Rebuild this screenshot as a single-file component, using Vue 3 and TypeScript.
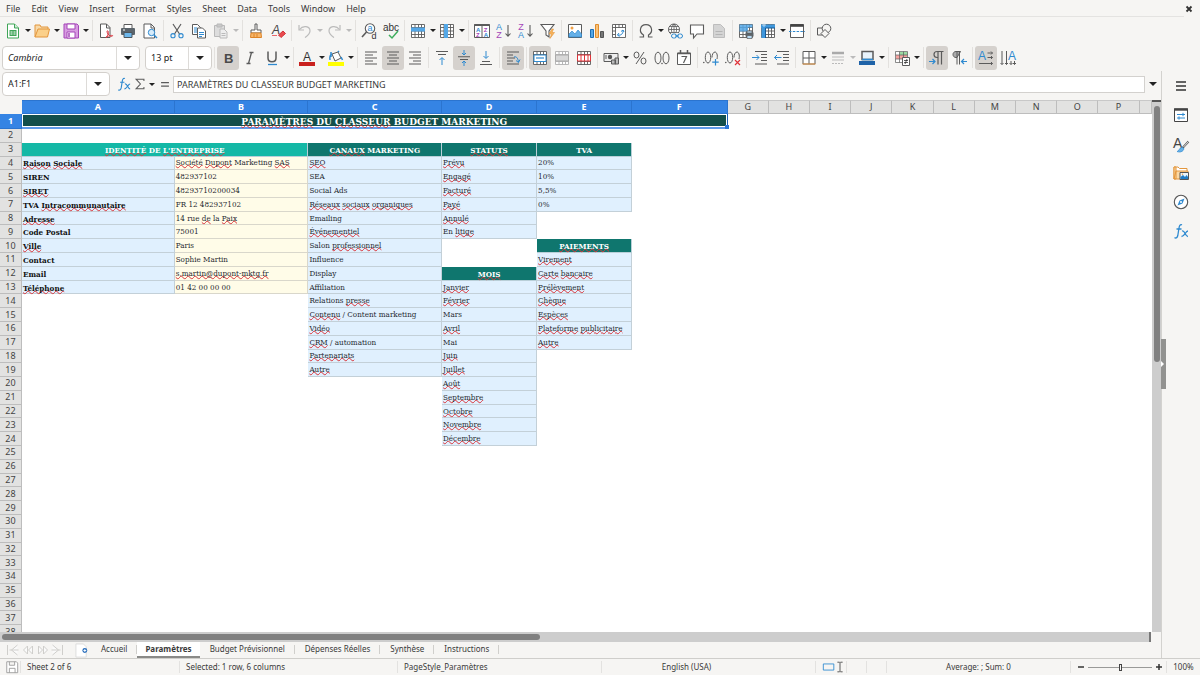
<script setup lang="ts">
import { ref } from 'vue'

type Tool = { icon: string; label: string; drop?: boolean; active?: boolean; off?: boolean }
type Cell = { text: string; kind: string; span: number }

const menus = ['File', 'Edit', 'View', 'Insert', 'Format', 'Styles', 'Sheet', 'Data', 'Tools', 'Window', 'Help']

const G = '#5b5b5b'
const B = '#2f8ad0'
const grid = (c: string) =>
  `<path d="M1.5 1.5h13v13h-13zM1.5 4.5h13M1.5 8h13M1.5 11.5h13M5 1.5v13M8.5 1.5v13M11.5 1.5v13" fill="#fff" stroke="${c}" stroke-width=".9"/>`
const lines = (rows: number[][], c = G) =>
  `<path d="${rows.map(([x, y, w]) => `M${x} ${y}h${w}`).join('')}" stroke="${c}" stroke-width="1.1" fill="none"/>`

const icons: Record<string, string> = {
  new: `<path d="M2.5 1h7l4 4v10h-11z" fill="#fff" stroke="#3fa557"/><path d="M9.500 1v4h4" fill="#cfeed6" stroke="#3fa557"/><path d="M4.500 7h7v6h-7z" fill="#3fa557"/><path d="M5.500 9h2M8.500 9h2M5.500 11h2M8.500 11h2" stroke="#fff"/>`,
  open: `<path d="M1 14V2h5l1 2h7v3" fill="#f7d9a8" stroke="#e3963c"/><path d="M1 14l3-8h11.500l-2 8z" fill="#fbd08a" stroke="#e3963c"/>`,
  save: `<path d="M1 1h13l1.500 1.500V15H1z" fill="#d79be0" stroke="#a545b8"/><path d="M4 1h8v5H4z" fill="#fff" stroke="#a545b8"/><path d="M4 9h8v6H4z" fill="#fff" stroke="#a545b8"/><path d="M6 10v4" stroke="#a545b8" stroke-width="1.500"/>`,
  pdf: `<path d="M2.500 1h6l3.500 3.500V14.500H2.500z" fill="#fff" stroke="${G}"/><path d="M8.500 1v4h3.500" fill="none" stroke="${G}"/><path d="M8 14.500c2-2 3-5 2-6.500-1-1-1.500 1 0 3s3.500 3 4.500 2-3-1-6.500 1.500z" fill="none" stroke="#dd3c46"/>`,
  print: `<path d="M4 1.500h8v4H4z" fill="#fff" stroke="${G}"/><rect x="1" y="5" width="14" height="7" rx="1" fill="#5b646b"/><path d="M4 9.500h8v5H4z" fill="#6cb6ea" stroke="#4c555c"/><path d="M3 7h2" stroke="#fff"/>`,
  preview: `<path d="M2 1h7l3.500 3.500V15H2z" fill="#fff" stroke="${G}"/><path d="M9 1v4h3.500" fill="none" stroke="${G}"/><circle cx="9.500" cy="9.500" r="3.200" fill="#d8ecfa" stroke="${B}"/><path d="M12 12l3 3" stroke="${B}" stroke-width="1.400"/>`,
  cut: `<path d="M4 1l6.500 10M12 1L5.500 11" stroke="${G}" fill="none" stroke-width="1.200"/><circle cx="4" cy="12.700" r="2.100" fill="none" stroke="${B}" stroke-width="1.100"/><circle cx="12" cy="12.700" r="2.100" fill="none" stroke="${B}" stroke-width="1.100"/>`,
  copy: `<path d="M1.500 1.500h5l3 3v7h-8z" fill="#fff" stroke="${G}"/><path d="M3 5h3M3 7h3M3 9h3" stroke="${B}"/><path d="M6.500 5h5l3 3v7h-8z" fill="#fff" stroke="${G}"/><path d="M8 9.500h5M8 11.500h5M8 13.500h3" stroke="${B}"/>`,
  paste: `<path d="M1.500 2.500h10v11h-10z" fill="#ddd" stroke="#b9b9b9"/><path d="M4 1h5v3H4z" fill="#c9c9c9" stroke="#b9b9b9"/><path d="M7 6h4l3 3v6H7z" fill="#eee" stroke="#b9b9b9"/><path d="M8.500 10.500h4M8.500 12.500h4" stroke="#bbb"/>`,
  clone: `<path d="M7 1h2v6h4v3H3V7h4z" fill="#fff" stroke="${G}"/><path d="M3 10h10l.500 4.500h-11z" fill="#f7b66b" stroke="#dd8427"/><path d="M6 11v3M9 11v3" stroke="#dd8427"/>`,
  clear: `<text x="2" y="11" font-size="12" font-style="italic" font-family="Liberation Sans, sans-serif" fill="#444">A</text><path d="M8.500 12l4.500-4 2.500 2.500-4.500 4z" fill="#ea4a4e" stroke="#d0353a"/><path d="M2 12.500h5" stroke="#e9686b"/>`,
  undo: `<path d="M2 2v5h5" fill="none" stroke="#bbb" stroke-width="1.200"/><path d="M2.500 6.500C6 2 13 3 13 8c0 3-3 5-5 6.500" fill="none" stroke="#bbb" stroke-width="1.200"/>`,
  redo: `<path d="M14 2v5H9" fill="none" stroke="#bbb" stroke-width="1.200"/><path d="M13.500 6.500C10 2 3 3 3 8c0 3 3 5 5 6.500" fill="none" stroke="#bbb" stroke-width="1.200"/>`,
  find: `<circle cx="9" cy="5.500" r="4.700" fill="#fff" stroke="${G}" stroke-width="1.100"/><path d="M5.500 9L1 14" stroke="${G}" stroke-width="1.600"/><text x="6.500" y="8" font-size="9" font-family="Liberation Sans, sans-serif" fill="${B}">a</text><text x="10.500" y="15.500" font-size="9" font-family="Liberation Sans, sans-serif" fill="#333">d</text>`,
  spell: `<text x="0" y="7.500" font-size="10" font-family="Liberation Sans, sans-serif" fill="#333">abc</text><path d="M6 12l3 3 6-7" stroke="#3fae5e" stroke-width="1.500" fill="none"/>`,
  row: grid(G) + `<path d="M1 4.500h14v4H1z" fill="#54a7e6"/>`,
  col: grid(G) + `<path d="M5 1h4v14H5z" fill="#54a7e6"/>`,
  sort: `<path d="M.500 1.500h15v13H.500zM8 1.500v13" fill="#fff" stroke="${G}"/><path d="M.500 2h15" stroke="${G}" stroke-width="2"/><g font-size="6" font-family="Liberation Sans, sans-serif" font-weight="700"><text x="2" y="8.500" fill="${B}">A</text><text x="2" y="14" fill="#a545b8">Z</text><text x="9.700" y="8.500" fill="#a545b8">Z</text><text x="9.700" y="14" fill="${B}">A</text></g>`,
  asc: `<g font-size="9" font-family="Liberation Sans, sans-serif"><text x="0" y="7" fill="${B}">A</text><text x=".300" y="15" fill="#a545b8">Z</text></g><path d="M12 2v11M9.500 10.500L12 13.200l2.500-2.700" stroke="${G}" fill="none" stroke-width="1.100"/>`,
  desc: `<g font-size="9" font-family="Liberation Sans, sans-serif"><text x=".300" y="7" fill="#a545b8">Z</text><text x="0" y="15" fill="${B}">A</text></g><path d="M12 2v11M9.500 10.500L12 13.200l2.500-2.700" stroke="${G}" fill="none" stroke-width="1.100"/>`,
  filter: `<path d="M1 1.500h13L9 8v6l-3-2V8z" fill="#fff" stroke="${G}" stroke-width="1.100"/><path d="M12 6L9 11h2.500L10 15.500l4.500-6H12L13.500 6z" fill="#f9b45a" stroke="#e3963c" stroke-width=".6"/>`,
  image: `<path d="M1.500 1.500h13v13h-13z" fill="#fff" stroke="${G}"/><circle cx="5" cy="5" r="1.500" fill="#f0a046"/><path d="M2 14v-3l3-3 3 3 3-4 3.500 4v3z" fill="#64b0e8" stroke="${B}" stroke-width=".7"/>`,
  chart: `<path d="M1.500 6.500h3v8h-3z" fill="#54a7e6" stroke="#1d6fb4"/><path d="M6.500 1.500h3v13h-3z" fill="#f9c27a" stroke="#e08d2c"/><path d="M11.500 8.500h3v6h-3z" fill="#777" stroke="#555"/>`,
  pivot: `<path d="M1.500 1.500h13v13h-13zM1.500 4.500h13M4.500 1.500v13M8 1.500v3M11.500 1.500v3M1.500 8h3M1.500 11.500h3" fill="#fff" stroke="${G}" stroke-width=".9"/><path d="M6.500 12c4 1 6-2 5.500-5M12 7l-2 1.500M12 7l1 2M6.500 12l1.500-2M6.500 12l2 1.500" fill="none" stroke="${B}"/>`,
  omega: `<path d="M1.500 14h4v-2C3 10.500 2 8.500 2.500 6 3 3 5 1.700 8 1.700S13 3 13.500 6c.500 2.500-.500 4.500-3 6v2h4" fill="none" stroke="${G}" stroke-width="1.200"/>`,
  link: `<circle cx="7" cy="6.500" r="5.500" fill="#fff" stroke="${G}"/><path d="M1.500 6.500h11M7 1v11M2.500 3.500h9M3 9.500h8M7 1C3.500 4 3.500 9 7 12M7 1c3.500 3 3.500 8 0 11" fill="none" stroke="${G}" stroke-width=".8"/><path d="M4 10h12v6H4z" fill="#f6f5f3"/><rect x="4.500" y="11" width="5" height="4" rx="2" fill="none" stroke="${B}"/><rect x="10.500" y="11" width="5" height="4" rx="2" fill="none" stroke="${B}"/><path d="M8 13h4" stroke="${B}"/>`,
  comment: `<path d="M1.500 2h13v9H8l-3.500 4V11h-3z" fill="#fff" stroke="${G}" stroke-width="1.100"/>`,
  headfoot: `<path d="M2.500 1.500h7l4 4v9h-11z" fill="#d4d4d4" stroke="#bdbdbd"/><path d="M4.500 11.500h7M4.500 8.500h7" stroke="#b5b5b5"/>`,
  printarea: grid(G) + `<path d="M1.500 1.500h13v3h-13zM1.500 4.500h8.500v4h-8.500z" fill="#54a7e6" opacity=".85"/><rect x="7.500" y="9.500" width="8" height="4" fill="#5b646b"/><path d="M9 8h5v2H9zM9 12.500h5v3H9z" fill="#b9dcf5" stroke="${G}" stroke-width=".7"/>`,
  freeze: grid(G) + `<path d="M1 1.500h14v3.500H1zM1.500 1.500h4v13.500h-4z" fill="#3f97dc"/><path d="M5.500 5v10M5.500 5H15" stroke="#155a98"/><path d="M4 0v4M2 2h4" stroke="#cfe7f9" stroke-width=".8"/>`,
  split: `<path d="M1.500 1.500h13v13h-13z" fill="#fff" stroke="${G}"/><path d="M1.500 2.500h13" stroke="#444" stroke-width="2.600"/><path d="M0 8.500h16" stroke="${B}" stroke-dasharray="2.500 1.300"/>`,
  shapes: `<path d="M1.500 5h7v7h-7z" fill="#f6f5f3" stroke="${G}"/><circle cx="10.500" cy="5.500" r="4.300" fill="#f6f5f3" stroke="${G}"/><path d="M9 6.500l4 4-4 4-4-4z" fill="#f6f5f3" stroke="${G}"/>`,
  bold: `<text x="4" y="12.500" font-size="13" font-weight="700" font-family="Liberation Sans, sans-serif" fill="#4a4a4a">B</text>`,
  italic: `<path d="M7.500 2.500h4M4.500 13.500h4M9.500 2.500L6.500 13.500" stroke="${G}" stroke-width="1.300"/>`,
  underline: `<path d="M4 1.500v6.500c0 5 8 5 8 0V1.500" fill="none" stroke="${G}" stroke-width="1.500"/><path d="M4 14.500h9" stroke="${B}" stroke-width="1.300"/>`,
  fontcolor: `<text x="4" y="10.500" font-size="12" font-family="Liberation Sans, sans-serif" fill="#333">A</text><path d="M0 12h16v4H0z" fill="#c9211e"/>`,
  highlight: `<path d="M4 4l6-2 3 6-6 3z" fill="#fff" stroke="${G}"/><path d="M4 4c-2 1-2.500 3-2 6M3 2v5M10 2l1-1" stroke="${B}" fill="none" stroke-width="1.500"/><path d="M13 7l1.500 3" stroke="${B}" stroke-width="1.500"/><path d="M0 12h16v4H0z" fill="#ffff00"/>`,
  left: lines([[2, 2, 12], [2, 5, 8], [2, 8, 12], [2, 11, 8], [2, 14, 12]]),
  center: lines([[2, 2, 12], [4, 5, 8], [2, 8, 12], [4, 11, 8], [2, 14, 12]]),
  right: lines([[2, 2, 12], [6, 5, 8], [2, 8, 12], [6, 11, 8], [2, 14, 12]]),
  top: lines([[2, 1.5, 12], [4, 4.5, 8]]) + `<path d="M8 15V8M5.500 10L8 7.500l2.500 2.500" stroke="${B}" fill="none"/>`,
  middle: lines([[2, 6.8, 12], [4, 9.5, 8]]) + `<path d="M8 0v5M6 3l2 2 2-2M8 16v-5M6 13l2-2 2 2" stroke="${B}" fill="none"/>`,
  bottom: lines([[4, 11.5, 8], [2, 14.5, 12]]) + `<path d="M8 1v7M5.500 6L8 8.500 10.500 6" stroke="${B}" fill="none"/>`,
  wrap: lines([[2, 2, 12], [2, 5, 6], [2, 8, 8], [2, 11, 6], [2, 14, 12]]) + `<path d="M9 7c3-1 4 2 4.500 5M11 10.500l2.500 2 1.500-3" stroke="${B}" fill="none"/>`,
  merge: grid(G) + `<path d="M2 5h12v6.500H2z" fill="#fff" stroke="${B}"/><path d="M4 8h8" stroke="${B}" stroke-width="1.200"/>`,
  mergecell: grid('#b0b0b0') + `<path d="M1.500 5h13v6h-13z" fill="#d8d8d8" stroke="#aaa"/>`,
  unmerge: grid(G) + `<path d="M1.500 5h13v6h-13zM5 5v6M8.500 5v6M12 5v6" fill="#fff" stroke="#e0343a"/>`,
  currency: `<path d="M1 3.500h14v8H1z" fill="#eee" stroke="${G}"/><circle cx="7" cy="7" r="2.200" fill="#555"/><path d="M3 5v4" stroke="${G}"/><path d="M8.500 10h4v4h-4zM12 8h3.500v6H12z" fill="#bbb" stroke="${G}"/>`,
  percent: `<ellipse cx="4.500" cy="5" rx="2.500" ry="3" fill="none" stroke="${G}"/><ellipse cx="11.500" cy="11" rx="2.500" ry="3" fill="none" stroke="${G}"/><path d="M12 2L4 14" stroke="${G}"/>`,
  number: `<ellipse cx="4" cy="8" rx="3" ry="5.800" fill="none" stroke="${G}"/><ellipse cx="12" cy="8" rx="3" ry="5.800" fill="none" stroke="${G}"/><circle cx="8" cy="13.500" r=".8" fill="${G}"/>`,
  date: `<path d="M1.500 3h13v11.500h-13z" fill="#fff" stroke="${G}"/><path d="M1.500 3.500h13M4.500 0v4M11.500 0v4" stroke="${G}" stroke-width="1.500"/><path d="M5.500 6.500h5L7.500 13" stroke="${G}" stroke-width="1.200" fill="none"/>`,
  adddec: `<circle cx=".800" cy="12.500" r=".8" fill="${G}"/><ellipse cx="5" cy="7.500" rx="2.700" ry="5.500" fill="none" stroke="${G}"/><path d="M14 9c1-4-.500-7-2-7-2 0-3 3-3 5.500" fill="none" stroke="${G}"/><path d="M12.500 9v6.500M9.200 12.200h6.500" stroke="${B}" stroke-width="1.200"/>`,
  deldec: `<circle cx=".800" cy="12.500" r=".8" fill="${G}"/><ellipse cx="5" cy="7.500" rx="2.700" ry="5.500" fill="none" stroke="${G}"/><path d="M14 9c1-4-.500-7-2-7-2 0-3 3-3 5.500" fill="none" stroke="${G}"/><path d="M10 10l5 5M15 10l-5 5" stroke="#e0343a" stroke-width="1.200"/>`,
  indent: lines([[3, 1.5, 12], [9, 4.5, 6], [9, 7.5, 6], [9, 10.5, 6], [3, 14, 12]]) + `<path d="M0 7.500h7M4.500 5L7 7.500 4.500 10" stroke="${B}" fill="none"/>`,
  outdent: lines([[3, 1.5, 12], [9, 4.5, 6], [9, 7.5, 6], [9, 10.5, 6], [3, 14, 12]]) + `<path d="M7.500 7.500H.500M3 5L.500 7.500 3 10" stroke="${B}" fill="none"/>`,
  borders: `<path d="M2 1.500h12v12.500H2zM8 1.500V14M2 8h12" fill="#fff" stroke="${G}"/><path d="M1.500 14h13" stroke="#e89a45"/>`,
  bstyle: `<path d="M2 3h12" stroke="#aaa" stroke-width="2.500"/><path d="M2 7h12M2 10h12" stroke="#bbb"/><path d="M2 13.500h12" stroke="#bbb" stroke-dasharray="2 1"/>`,
  bcolor: `<path d="M3 1.500h11v8H3z" fill="#e8f3fb" stroke="${G}" stroke-width="1.500"/><path d="M3 9.500h11" stroke="${B}" stroke-width="1.600"/><path d="M0 11h16v4H0z" fill="#1f63a8"/>`,
  cond: `<path d="M1.500 1.500h12v11h-12z" fill="#fff"/><path d="M5.500 2h8v3h-8z" fill="#9bd9a2"/><path d="M2 5h11v4H2z" fill="#f5a3a0"/><path d="M1.500 1.500h12v11h-12zM1.500 5h12M1.500 9h12M5.500 1.500v11M9.500 1.500v11" stroke="${G}" stroke-width=".7"/><path d="M8.500 7.500h7v8h-7z" fill="#fff" stroke="${G}"/><path d="M10 10.500h4M10 12.500h4M13 9l-2 5" stroke="#333" stroke-width=".8"/>`,
  ltr: `<path d="M14.500 1.500H8c-4 0-4 6 0 6h1M9 1.500v13M12.500 1.500v13" fill="none" stroke="${G}" stroke-width="1.200"/><path d="M0 11.500h6M3.500 9L6 11.500 3.500 14" fill="none" stroke="${B}" stroke-width="1.200"/>`,
  rtl: `<path d="M9.500 1.500H5c-4 0-4 6 0 6h1z" fill="#aaa" stroke="${G}"/><path d="M6 1.500v13M8.500 1.500v13" stroke="${G}"/><path d="M16 11.500h-5.500M13 9l-2.500 2.500L13 14" fill="none" stroke="${B}" stroke-width="1.200"/>`,
  texth: `<text x="0" y="10" font-size="12" font-family="Liberation Sans, sans-serif" fill="${B}">A</text><path d="M9.500 3h5M13 1.500L14.500 3 13 4.500M9.500 7.500h5M13 6l1.500 1.500L13 9M1 13.500h13.500M13 12l1.500 1.500L13 15" stroke="${G}" fill="none"/>`,
  textv: `<text x="8" y="10" font-size="12" font-family="Liberation Sans, sans-serif" fill="${B}">A</text><path d="M2 1v13.500M.500 13L2 14.500 3.500 13M6.500 1v13.500M5 13l1.500 1.500L8 13M11 11v3.500M9.500 13l1.500 1.500 1.500-1.500M14.500 11v3.500M13 13l1.500 1.500L16 13" stroke="${G}" fill="none"/>`,
  fx: `<path d="M9 1.800C7 .800 6.300 3 6 5L4.800 12.500c-.400 2-1.500 3-3.300 2.200M3.500 6h5" fill="none" stroke="${B}" stroke-width="1.300"/><path d="M9 8c3-1 3 5.500 6 5.500M15 8c-2.500 0-3.500 5.500-6.500 5.500" fill="none" stroke="${B}" stroke-width="1.300"/>`,
  sigma: `<path d="M12.500 4.500V2.500H3.500L8.500 8l-5 5.500h9v-2" fill="none" stroke="${G}" stroke-width="1.200"/>`,
  equal: `<path d="M3.500 6.500h9M3.500 10.500h9" stroke="${G}" stroke-width="1.500"/>`,
  burger: `<path d="M3 4h10M3 8h10M3 12h10" stroke="#333" stroke-width="1.400"/>`,
  props: `<path d="M1.500 2h13v12.500h-13z" fill="#fff" stroke="#444"/><path d="M1 2.500h14" stroke="#444" stroke-width="2.400"/><path d="M4 7.500h8M4 11h8M10 5.800v3.400M6 9.400v3.200" stroke="${B}"/>`,
  styles: `<text x="0" y="12" font-size="14" font-family="Liberation Sans, sans-serif" fill="#444">A</text><path d="M15.500 5.500L9.500 12" stroke="${G}" stroke-width="2"/><path d="M15.500 5.500L10.500 11" stroke="#fff" stroke-width=".8"/><path d="M4 15.500c2 0 2-3.500 4.500-4s3 2 1 3.500-4 1-5.500.5z" fill="#66b1e8" stroke="${B}" stroke-width=".7"/>`,
  gallery: `<path d="M1 14V2h4l1.500 1.500H14V7" fill="#fff" stroke="#e3963c"/><path d="M1 14V2h2v12zM3 6h12v8H1z" fill="#fbd9a5" stroke="#e3963c"/><path d="M7 7.500h8.500v7H7z" fill="#eaf5fd" stroke="#555"/><path d="M7.500 14v-2l2.500-2 2 2 1.500-2 1.500 2v2z" fill="#1f7cc6"/><circle cx="9.500" cy="9.300" r=".7" fill="#f0a046"/>`,
  navigator: `<circle cx="8" cy="8" r="6.700" fill="#fff" stroke="#555" stroke-width="1.100"/><path d="M11.500 4.500L9.500 9.500 4.500 11.500 6.500 6.500z" fill="${B}"/><circle cx="8" cy="8" r="1" fill="#fff"/>`,
  floppy: `<path d="M2 2h11l1.500 1.500V14.500H2zM5 2v4h6V2M5 14.500V9.500h6.500v5" fill="#fff" stroke="#999"/>`,
  addsheet: `<path d="M1.500 1h8l3 3v11h-11z" fill="#fff" stroke="#dcdcdc"/><circle cx="11" cy="8" r="2.600" fill="#2a6fbd"/><path d="M11 6.500v3M9.500 8h3" stroke="#fff"/>`,
  selmode: `<path d="M1.500 4.500h12v7h-12z" fill="none" stroke="${B}"/>`,
  ibeam: `<path d="M5 2.500h2.500l.500.500.500-.500H11M5 13.500h2.500l.500-.500.500.500H11M8 3v10" fill="none" stroke="#555" stroke-width="1.100"/>`
}

const t = (icon: string, label: string, o: Partial<Tool> = {}): Tool => ({ icon, label, ...o })
const d = { drop: true }

const standard: Tool[][] = [
  [t('new', 'New', d), t('open', 'Open', d), t('save', 'Save', d)],
  [t('pdf', 'Export as PDF'), t('print', 'Print'), t('preview', 'Print Preview')],
  [t('cut', 'Cut'), t('copy', 'Copy'), t('paste', 'Paste', { drop: true, off: true })],
  [t('clone', 'Clone Formatting'), t('clear', 'Clear Direct Formatting')],
  [t('undo', 'Undo', { drop: true, off: true }), t('redo', 'Redo', { drop: true, off: true })],
  [t('find', 'Find and Replace'), t('spell', 'Spelling')],
  [t('row', 'Row', d), t('col', 'Column', d)],
  [t('sort', 'Sort'), t('asc', 'Sort Ascending'), t('desc', 'Sort Descending'), t('filter', 'AutoFilter')],
  [t('image', 'Insert Image'), t('chart', 'Insert Chart'), t('pivot', 'Pivot Table')],
  [t('omega', 'Special Character', d), t('link', 'Hyperlink'), t('comment', 'Comment'), t('headfoot', 'Headers and Footers', { off: true })],
  [t('printarea', 'Define Print Area'), t('freeze', 'Freeze Rows and Columns', d), t('split', 'Split Window')],
  [t('shapes', 'Show Draw Functions')]
]
const on = { active: true }
const formatting: Tool[][] = [
  [t('bold', 'Bold', on), t('italic', 'Italic'), t('underline', 'Underline', d)],
  [t('fontcolor', 'Font Color', d), t('highlight', 'Background Color', d)],
  [t('left', 'Align Left'), t('center', 'Center Horizontally', on), t('right', 'Align Right')],
  [t('top', 'Align Top'), t('middle', 'Center Vertically', on), t('bottom', 'Align Bottom')],
  [t('wrap', 'Wrap Text', on)],
  [t('merge', 'Merge and Center', on), t('mergecell', 'Merge Cells', { off: true }), t('unmerge', 'Unmerge Cells')],
  [t('currency', 'Currency', d), t('percent', 'Percent'), t('number', 'Number'), t('date', 'Date')],
  [t('adddec', 'Add Decimal Place'), t('deldec', 'Delete Decimal Place')],
  [t('indent', 'Increase Indent'), t('outdent', 'Decrease Indent')],
  [t('borders', 'Borders', d), t('bstyle', 'Border Style', { drop: true, off: true }), t('bcolor', 'Border Color', d)],
  [t('cond', 'Conditional Formatting', d)],
  [t('ltr', 'Left-To-Right', on), t('rtl', 'Right-To-Left')],
  [t('texth', 'Text direction from left to right', on), t('textv', 'Text direction from top to bottom')]
]
const deck = [t('burger', 'Sidebar Settings'), t('props', 'Properties'), t('styles', 'Styles'), t('gallery', 'Gallery'), t('navigator', 'Navigator'), t('fx', 'Functions')]

const fontName = ref('Cambria')
const fontSize = ref('13 pt')
const cellRef = ref('A1:F1')
const formula = ref('PARAMÈTRES DU CLASSEUR BUDGET MARKETING')
const zoom = ref(50)

const columns = 'ABCDEFGHIJKLMNOPQ'.split('')

// A leading underscore marks a word that the spell checker flags.
const blocks: { col: number; row: number; kind: string; items: string[] }[] = [
  { col: 0, row: 4, kind: 'label', items: ['_Raison _Sociale', 'SIREN', '_SIRET', 'TVA _Intracommunautaire', '_Adresse', 'Code Postal', '_Ville', 'Contact', 'Email', '_Téléphone'] },
  { col: 1, row: 4, kind: 'entry', items: ['_Société _Dupont Marketing _SAS', '482937102', '48293710200034', 'FR 12 482937102', '14 rue _de la _Paix', '75001', 'Paris', 'Sophie Martin', '_s.martin@dupont-mktg.fr', '01 42 00 00 00'] },
  { col: 2, row: 3, kind: 'head', items: ['_CANAUX MARKETING'] },
  { col: 2, row: 4, kind: 'list', items: ['_SEO', 'SEA', 'Social Ads', '_Réseaux _sociaux _organiques', 'Emailing', '_Événementiel', 'Salon _professionnel', 'Influence', 'Display', 'Affiliation', 'Relations _presse', '_Contenu / Content marketing', '_Vidéo', '_CRM / automation', '_Partenariats', '_Autre'] },
  { col: 3, row: 3, kind: 'head', items: ['_STATUTS'] },
  { col: 3, row: 4, kind: 'list', items: ['_Prévu', '_Engagé', '_Facturé', '_Payé', '_Annulé', 'En _litige'] },
  { col: 3, row: 12, kind: 'head', items: ['_MOIS'] },
  { col: 3, row: 13, kind: 'list', items: ['_Janvier', '_Février', 'Mars', '_Avril', 'Mai', '_Juin', '_Juillet', '_Août', '_Septembre', '_Octobre', '_Novembre', '_Décembre'] },
  { col: 4, row: 3, kind: 'head', items: ['TVA'] },
  { col: 4, row: 4, kind: 'list', items: ['20%', '10%', '5,5%', '0%'] },
  { col: 4, row: 10, kind: 'head', items: ['_PAIEMENTS'] },
  { col: 4, row: 11, kind: 'list', items: ['_Virement', '_Carte _bancaire', '_Prélèvement', '_Chèque', '_Espèces', '_Plateforme _publicitaire', '_Autre'] }
]

function cellAt(row: number, col: number): Cell {
  for (const b of blocks) {
    const item = b.items[row - b.row]
    if (b.col === col && item !== undefined) return { text: item, kind: b.kind, span: 1 }
  }
  return { text: '', kind: 'blank', span: 1 }
}

const rows = Array.from({ length: 38 }, (_, i) => {
  const n = i + 1
  const cells: Cell[] = []
  if (n === 1) cells.push({ text: '_PARAMÈTRES DU _CLASSEUR BUDGET MARKETING', kind: 'title', span: 6 })
  if (n === 3) cells.push({ text: "_IDENTITÉ DE _L'ENTREPRISE", kind: 'band', span: 2 })
  const start = n === 1 ? 6 : n === 3 ? 2 : 0
  for (let c = start; c < columns.length; c++) cells.push(cellAt(n, c))
  return { n, cells }
})

const words = (s: string) => s.split(' ').map((w, i) => ({ lead: i ? ' ' : '', bad: w.startsWith('_'), w: w.replace('_', '') }))

const tabs = ['Accueil', 'Paramètres', 'Budget Prévisionnel', 'Dépenses Réelles', 'Synthèse', 'Instructions']
const current = ref('Paramètres')
</script>

<template>
  <div class="app">
    <nav class="menubar" aria-label="Menu">
      <button v-for="m in menus" :key="m" type="button">{{ m }}</button>
      <button class="close" type="button" aria-label="Close document">
        <svg viewBox="0 0 8 8"><path d="M1.500 1.500l5 5M6.500 1.500l-5 5" stroke="#333" stroke-width="1.800" /></svg>
      </button>
    </nav>

    <div class="toolbar" role="toolbar" aria-label="Standard">
      <template v-for="(g, gi) in standard" :key="gi">
        <span v-if="gi" class="sep"></span>
        <template v-for="b in g" :key="b.icon">
          <button class="tool" :class="{ active: b.active }" type="button" :aria-label="b.label" :disabled="b.off">
            <svg viewBox="0 0 16 16" fill="none" v-html="icons[b.icon]"></svg>
          </button>
          <button v-if="b.drop" class="arrow" type="button" :aria-label="b.label + ' options'" :disabled="b.off"></button>
        </template>
      </template>
    </div>

    <div class="toolbar" role="toolbar" aria-label="Formatting">
      <div class="combo font">
        <input v-model="fontName" aria-label="Font Name" />
        <button type="button" aria-label="Font list"></button>
      </div>
      <div class="combo size">
        <input v-model="fontSize" aria-label="Font Size" />
        <button type="button" aria-label="Size list"></button>
      </div>
      <template v-for="(g, gi) in formatting" :key="gi">
        <span class="sep"></span>
        <template v-for="b in g" :key="b.icon">
          <button class="tool" :class="{ active: b.active }" type="button" :aria-label="b.label" :disabled="b.off">
            <svg viewBox="0 0 16 16" fill="none" v-html="icons[b.icon]"></svg>
          </button>
          <button v-if="b.drop" class="arrow" type="button" :aria-label="b.label + ' options'" :disabled="b.off"></button>
        </template>
      </template>
    </div>

    <div class="main">
      <div class="work">
        <div class="formula">
          <div class="combo name">
            <input v-model="cellRef" aria-label="Name Box" />
            <button type="button" aria-label="Name list"></button>
          </div>
          <button class="fbtn" type="button" aria-label="Function Wizard"><svg viewBox="0 0 16 16" fill="none" v-html="icons.fx"></svg></button>
          <button class="fbtn" type="button" aria-label="Select Function"><svg viewBox="0 0 16 16" fill="none" v-html="icons.sigma"></svg></button>
          <button class="arrow" type="button" aria-label="Function options"></button>
          <button class="fbtn eq" type="button" aria-label="Formula"><svg viewBox="0 0 16 16" fill="none" v-html="icons.equal"></svg></button>
          <input v-model="formula" class="line" aria-label="Input line" />
          <button class="expand" type="button" aria-label="Expand Formula Bar"></button>
        </div>

        <div class="sheetrow">
          <div class="sheet">
            <table>
              <thead>
                <tr>
                  <th class="corner"></th>
                  <th v-for="(c, ci) in columns" :key="c" class="colhead" :class="{ sel: ci < 6 }" scope="col">{{ c === 'Q' ? '' : c }}</th>
                </tr>
              </thead>
              <tbody>
                <tr v-for="r in rows" :key="r.n">
                  <th class="rowhead" :class="{ sel: r.n === 1 }" scope="row">{{ r.n }}</th>
                  <td v-for="(c, ci) in r.cells" :key="ci" :class="[c.kind, 'span' + c.span]" :colspan="c.span">
                    <span v-if="c.text"><template v-for="(w, wi) in words(c.text)" :key="wi">{{ w.lead }}<span :class="{ bad: w.bad }">{{ w.w }}</span></template></span>
                  </td>
                </tr>
              </tbody>
            </table>
          </div>
          <div class="vscroll"><div class="thumb"></div></div>
        </div>
        <div class="hrow">
          <div class="hscroll"><div class="thumb"></div></div>
        </div>

        <div class="tabs">
          <div class="tabnav">
            <button v-for="(p, i) in ['M2 1v10M12 1L6 6l6 5M4 6h9', 'M7 2L3 6l4 4zM12 2L8 6l4 4z', 'M3 2l4 4-4 4zM8 2l4 4-4 4z', 'M12 1v10M2 1l6 5-6 5M1 6h9']" :key="i" type="button" :aria-label="['First sheet', 'Previous sheet', 'Next sheet', 'Last sheet'][i]">
              <svg viewBox="0 0 14 12"><path :d="p" fill="#fafafa" stroke="#cfcecb" /></svg>
            </button>
          </div>
          <button class="add" type="button" aria-label="Add sheet"><svg viewBox="0 0 16 16" fill="none" v-html="icons.addsheet"></svg></button>
          <button v-for="s in tabs" :key="s" class="tab" :class="{ current: s === current }" type="button" @click="current = s">{{ s }}</button>
        </div>
      </div>

      <aside class="deck" aria-label="Sidebar">
        <button v-for="b in deck" :key="b.icon" type="button" :aria-label="b.label">
          <svg viewBox="0 0 16 16" fill="none" v-html="icons[b.icon]"></svg>
        </button>
        <button class="handle" type="button" aria-label="Hide sidebar"></button>
      </aside>
    </div>

    <footer class="status">
      <span class="s-save"><svg viewBox="0 0 16 16" fill="none" v-html="icons.floppy"></svg></span>
      <span class="s-sheet">Sheet 2 of 6</span>
      <span class="s-sel">Selected: 1 row, 6 columns</span>
      <span class="s-style">PageStyle_Paramètres</span>
      <span class="s-lang">English (USA)</span>
      <span class="s-mode"><svg viewBox="0 0 16 16" fill="none" v-html="icons.selmode"></svg><svg class="beam" viewBox="0 0 16 16" fill="none" v-html="icons.ibeam"></svg></span>
      <span class="s-gap"></span>
      <span class="s-gap"></span>
      <span class="s-sum">Average: ; Sum: 0</span>
      <span class="s-zoom">
        <button type="button" aria-label="Zoom out"><svg viewBox="0 0 8 8"><path d="M1 4h6" stroke="#333" stroke-width="1.500" /></svg></button>
        <input v-model="zoom" type="range" aria-label="Zoom" />
        <button type="button" aria-label="Zoom in"><svg viewBox="0 0 8 8"><path d="M1 4h6M4 1v6" stroke="#333" stroke-width="1.500" /></svg></button>
      </span>
      <span class="s-pct">100%</span>
    </footer>
  </div>
</template>

<style>
body {
  margin: 0;
  background: #f6f5f3;
}
</style>

<style scoped>
.app {
  display: flex;
  flex-direction: column;
  height: 100vh;
  overflow: hidden;
  background: #f6f5f3;
  color: #3a3a3a;
  font: 9px/12px "Noto Sans", "Open Sans", sans-serif;
}
.app * {
  box-sizing: border-box;
}
button,
input {
  margin: 0;
  padding: 0;
  border: 0;
  background: none;
  color: inherit;
  font: inherit;
}
svg {
  display: block;
  width: 16px;
  height: 16px;
  overflow: visible;
}
.menubar {
  display: flex;
  flex: none;
  align-items: center;
  gap: 11px;
  height: 17px;
  margin-right: 16px;
  padding-top: 1px;
  padding-left: 6px;
  border-bottom: 1px solid #e4e3e1;
}
.close {
  margin-left: auto;
  margin-right: -9px;
}
.close svg {
  width: 8px;
  height: 8px;
}
.toolbar {
  display: flex;
  flex: none;
  align-items: center;
  height: 27px;
  padding-left: 2px;
}
.tool {
  display: flex;
  flex: none;
  align-items: center;
  justify-content: center;
  width: 22px;
  height: 24px;
  border-radius: 3px;
}
.tool.active {
  background: #d5d1cd;
}
.arrow {
  display: flex;
  flex: none;
  align-items: center;
  justify-content: center;
  width: 7px;
  height: 24px;
}
.arrow::before,
.combo button::before,
.expand::before {
  content: "";
  border: 3px solid transparent;
  border-top: 3px solid #222;
  border-bottom: 0;
}
.arrow:disabled::before {
  border-top-color: #bbb;
}
.sep {
  flex: none;
  width: 1px;
  height: 21px;
  margin: 0 2px;
  background: #e3e1de;
}
.arrow + .sep {
  margin-left: 3px;
}
.combo {
  display: flex;
  flex: none;
  height: 24px;
  border: 1px solid #d3d0cc;
  border-radius: 4px;
  background: #fff;
}
.combo input {
  flex: 1;
  min-width: 0;
  padding-left: 5px;
  color: #222;
}
.combo button {
  display: flex;
  align-items: center;
  justify-content: center;
  width: 23px;
  border-left: 1px solid #dddbd8;
}
.combo button::before {
  border-width: 4px 4px 0;
}
.font {
  width: 138px;
  margin-right: 5px;
}
.font input {
  font-style: italic;
}
.size {
  width: 67px;
}
.main {
  display: flex;
  flex: 1;
  min-height: 0;
}
.work {
  display: flex;
  flex: 1;
  flex-direction: column;
  min-width: 0;
}
.formula {
  display: flex;
  flex: none;
  align-items: center;
  height: 29px;
  padding: 0 0 3px 2px;
}
.name {
  width: 108px;
  margin-right: 6px;
}
.fbtn {
  flex: none;
  width: 16px;
}
.fbtn svg {
  height: 14px;
}
.eq {
  margin-left: 2px;
}
.line {
  flex: 1;
  min-width: 0;
  height: 17px;
  padding-left: 3px;
  border: 1px solid #d3d1ce;
  background: #fff;
}
.expand {
  display: flex;
  align-items: center;
  justify-content: center;
  width: 16px;
  height: 20px;
}
.expand::before {
  border-width: 4px 4px 0;
}
.sheetrow {
  display: flex;
  flex: 1;
  min-height: 0;
}
.sheet {
  flex: 1;
  min-width: 0;
  overflow: hidden;
  background: #fff;
}
table {
  display: grid;
  grid-template-columns: 22px 1527fr 1337fr 1337fr 950fr 950fr 955fr repeat(10, 412fr) 124fr;
  grid-template-rows: 14px 15px repeat(37, minmax(0, 1fr));
  height: calc(100% + 7px);
}
thead,
tbody,
tr {
  display: contents;
}
th,
td {
  display: flex;
  align-items: center;
  min-width: 0;
  min-height: 0;
  padding: 0;
  white-space: pre;
}
.span2 {
  grid-column: span 2;
}
.span6 {
  grid-column: span 6;
}
.corner {
  background: #f6f5f3;
}
.colhead,
.rowhead {
  justify-content: center;
  border-right: 1px solid #bdbdbd;
  border-bottom: 1px solid #bdbdbd;
  background: #e2e2e1;
  color: #444;
  font-weight: 400;
}
.colhead {
  border-top: 1px solid #c8c8c8;
}
.colhead.sel,
.rowhead.sel {
  border-color: #2b74cf;
  background: #3584e4;
  color: #fff;
  font-weight: 700;
}
td {
  padding-top: 1px;
  color: #1f2a30;
  font: 8px/12px "DejaVu Serif Condensed", "DejaVu Serif", serif;
}
.title,
.band,
.head {
  justify-content: center;
  color: #fff;
  font-weight: 700;
}
.title {
  position: relative;
  padding-top: 2px;
  border-right: 1px solid #1a5fb4;
  border-bottom: 2px solid #5f9bea;
  background: #134f4b;
  box-shadow: inset 0 0 0 1px #fff;
  font-size: 10px;
}
.title::after {
  content: "";
  position: absolute;
  right: -2px;
  bottom: -2px;
  width: 4px;
  height: 4px;
  background: #2a76d8;
}
.band,
.head {
  border-right: 1px solid #b9cfd8;
  border-bottom: 1px solid #b9cfd8;
}
.band {
  background: #14b8a6;
}
.head {
  background: #0f766e;
}
.label,
.entry,
.list {
  padding-left: 1px;
  border-right: 1px solid #c3d0d8;
  border-bottom: 1px solid #c3d0d8;
  background: #e0f0fe;
}
.label {
  color: #111;
  font-weight: 700;
}
.entry {
  border-color: #d9d7cb;
  background: #fffce8;
}
.bad {
  text-decoration: underline wavy #d8353a 1px;
  text-decoration-skip-ink: none;
  text-underline-offset: -1px;
}
.vscroll {
  flex: none;
  width: 9px;
  padding: 4px 1px 4px 2px;
  border-top: 2px solid #555;
  background: #cdcdcd;
}
.vscroll .thumb {
  height: 49%;
  border-radius: 3px;
  background: #808080;
}
.hrow {
  flex: none;
  height: 10px;
  padding-right: 10px;
}
.hscroll {
  height: 10px;
  padding: 2px;
  border-right: 2px solid #777;
  background: #cdcdcd;
}
.hscroll .thumb {
  width: 47%;
  height: 6px;
  border-radius: 3px;
  background: #808080;
}
.tabs {
  display: flex;
  flex: none;
  height: 16px;
  font-size: 8px;
}
.tabnav {
  display: flex;
  align-items: center;
  width: 74px;
  padding-left: 5px;
}
.tabnav svg {
  width: 15px;
  height: 12px;
}
.add {
  width: 17px;
}
.add svg {
  height: 15px;
}
.tab {
  position: relative;
  padding: 0 10px;
  border-bottom: 2px solid transparent;
}
.tab::after {
  content: "";
  position: absolute;
  top: 3px;
  right: 0;
  width: 1px;
  height: 9px;
  background: #d0cfcc;
}
.tab.current {
  padding: 0 8px;
  border-bottom-color: #8a8a88;
  background: #fff;
  font-weight: 700;
}
.tab.current::after {
  display: none;
}
.deck {
  position: relative;
  display: flex;
  flex: none;
  flex-direction: column;
  align-items: center;
  gap: 13px;
  width: 39px;
  padding-top: 7px;
  border-left: 1px solid #d3d2cf;
}
.handle {
  position: absolute;
  top: 50%;
  left: -1px;
  display: flex;
  align-items: center;
  width: 5px;
  height: 50px;
  margin-top: -26px;
  background: #929290;
}
.handle::before {
  content: "";
  border: 3px solid transparent;
  border-left-color: #fff;
  border-right: 0;
}
.status {
  display: flex;
  flex: none;
  align-items: center;
  height: 17px;
  border-top: 1px solid #cfcecb;
  font-size: 8px;
}
.status > span {
  display: flex;
  align-items: center;
  height: 12px;
  border-right: 1px solid #e3e2e0;
}
.status svg {
  width: 16px;
  height: 14px;
}
.status .s-save {
  width: 21px;
  padding-left: 4px;
}
.status .s-sheet {
  width: 159px;
  padding-left: 6px;
}
.status .s-sel {
  width: 218px;
  padding-left: 6px;
}
.status .s-style {
  width: 204px;
  padding-left: 6px;
}
.status .s-lang {
  flex: 1;
  justify-content: center;
  padding-right: 44px;
}
.status .s-mode {
  width: 31px;
  padding-left: 6px;
}
.status .beam {
  margin-left: -3px;
}
.status .s-gap {
  width: 20px;
}
.status .s-sum {
  width: 184px;
  justify-content: center;
}
.status .s-zoom {
  width: 96px;
  padding: 0 3px 0 6px;
  gap: 3px;
}
.s-zoom button,
.status .s-zoom svg {
  flex: none;
  width: 8px;
  height: 8px;
}
.s-zoom input {
  flex: 1;
  min-width: 0;
  height: 8px;
  appearance: none;
  background: linear-gradient(#9a9a98, #9a9a98) center / 100% 1px no-repeat;
}
.s-zoom input::-webkit-slider-thumb {
  width: 3px;
  height: 7px;
  appearance: none;
  border: 1px solid #444;
  background: #f6f5f3;
}
.status .s-pct {
  width: 33px;
  justify-content: center;
  border: 0;
}
</style>
